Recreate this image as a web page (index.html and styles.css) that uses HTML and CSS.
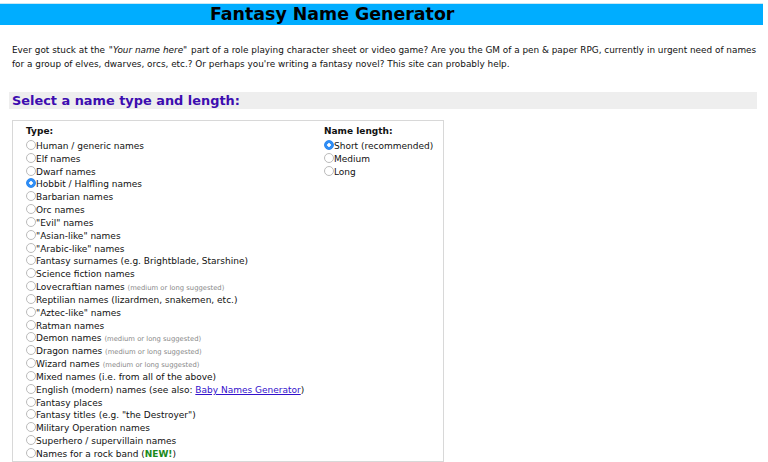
FILE: index.html
```html
<!DOCTYPE html>
<html lang="en">
<head>
    <meta charset="UTF-8">
    <title>Fantasy Name Generator</title>
    <link rel="stylesheet" href="styles.css">
</head>
<body>
    <!-- Title bar -->
    <div class="topbar">
        <h1>Fantasy Name Generator</h1>
    </div>

    <p class="intro">Ever got stuck at the <i>"Your name here"</i> part of a role playing character sheet or video game? Are you the GM of a pen &amp; paper RPG, currently in urgent need of names for a group of elves, dwarves, orcs, etc.? Or perhaps you're writing a fantasy novel? This site can probably help.</p>

    <h2 class="section">Select a name type and length:</h2>

    <form class="picker">
        <div class="col type-col">
            <div class="col-title">Type:</div>
            <label><input type="radio" name="type">Human / generic names</label>
            <label><input type="radio" name="type">Elf names</label>
            <label><input type="radio" name="type">Dwarf names</label>
            <label><input type="radio" name="type" checked>Hobbit / Halfling names</label>
            <label><input type="radio" name="type">Barbarian names</label>
            <label><input type="radio" name="type">Orc names</label>
            <label><input type="radio" name="type">"Evil" names</label>
            <label><input type="radio" name="type">"Asian-like" names</label>
            <label><input type="radio" name="type">"Arabic-like" names</label>
            <label><input type="radio" name="type">Fantasy surnames (e.g. Brightblade, Starshine)</label>
            <label><input type="radio" name="type">Science fiction names</label>
            <label><input type="radio" name="type">Lovecraftian names <span class="hint">(medium or long suggested)</span></label>
            <label><input type="radio" name="type">Reptilian names (lizardmen, snakemen, etc.)</label>
            <label><input type="radio" name="type">"Aztec-like" names</label>
            <label><input type="radio" name="type">Ratman names</label>
            <label><input type="radio" name="type">Demon names <span class="hint">(medium or long suggested)</span></label>
            <label><input type="radio" name="type">Dragon names <span class="hint">(medium or long suggested)</span></label>
            <label><input type="radio" name="type">Wizard names <span class="hint">(medium or long suggested)</span></label>
            <label><input type="radio" name="type">Mixed names (i.e. from all of the above)</label>
            <label><input type="radio" name="type">English (modern) names (see also: <a href="#">Baby Names Generator</a>)</label>
            <label><input type="radio" name="type">Fantasy places</label>
            <label><input type="radio" name="type">Fantasy titles (e.g. "the Destroyer")</label>
            <label><input type="radio" name="type">Military Operation names</label>
            <label><input type="radio" name="type">Superhero / supervillain names</label>
            <label><input type="radio" name="type">Names for a rock band (<b class="new">NEW!</b>)</label>
        </div>
        <div class="col length-col">
            <div class="col-title">Name length:</div>
            <label><input type="radio" name="len" checked>Short (recommended)</label>
            <label><input type="radio" name="len">Medium</label>
            <label><input type="radio" name="len">Long</label>
        </div>
    </form>
</body>
</html>
```

FILE: styles.css
```css
body {
    margin: 0;
    font-family: "DejaVu Sans", Verdana, sans-serif;
    color: #111;
    background: white;
}
/* Title bar */
.topbar {
    margin-top: 3px;
    width: 763px;
    height: 21px;
    background: #00adff;
    border-top: 1px solid #c8e8f4;
}
.topbar h1 {
    margin: 0;
    padding-left: 210px;
    font-size: 17.4px;
    line-height: 21px;
    color: black;
}
/* Intro text */
.intro {
    margin: 18px 6px 0 12px;
    font-size: 8.9px;
    line-height: 14px;
}
.intro i {
    padding: 0 1px;
}
/* Section header */
.section {
    margin: 21px 0 0 9px;
    width: 745px;
    height: 17px;
    padding-left: 3px;
    background: #eeeeee;
    color: #3d0db0;
    font-size: 12.9px;
    line-height: 17px;
}
/* Radio box */
.picker {
    display: flex;
    box-sizing: border-box;
    margin: 11px 0 0 12px;
    width: 432px;
    border: 1px solid #d8d8d8;
    padding: 4px 0 0 13px;
    font-size: 9px;
}
.col {
    display: flex;
    flex-direction: column;
}
.type-col {
    width: 298px;
}
.col-title {
    font-weight: bold;
    line-height: 13px;
    margin-bottom: 2px;
}
.col label {
    display: block;
    height: 12.83px;
    line-height: 12.83px;
    white-space: nowrap;
}
.col input {
    appearance: none;
    -webkit-appearance: none;
    display: inline-block;
    vertical-align: -1px;
    box-sizing: border-box;
    width: 10px;
    height: 10px;
    margin: 0;
    border: 1px solid #bbb;
    border-radius: 50%;
    background: white;
}
.col input:checked {
    border-color: #2c88f0;
    background: radial-gradient(circle, white 0 1.5px, #2f8ef6 2px);
}
.hint {
    font-size: 6.8px;
    color: #888;
}
.col a {
    color: #3311cc;
}
.new {
    color: #1b8a1b;
}
```
